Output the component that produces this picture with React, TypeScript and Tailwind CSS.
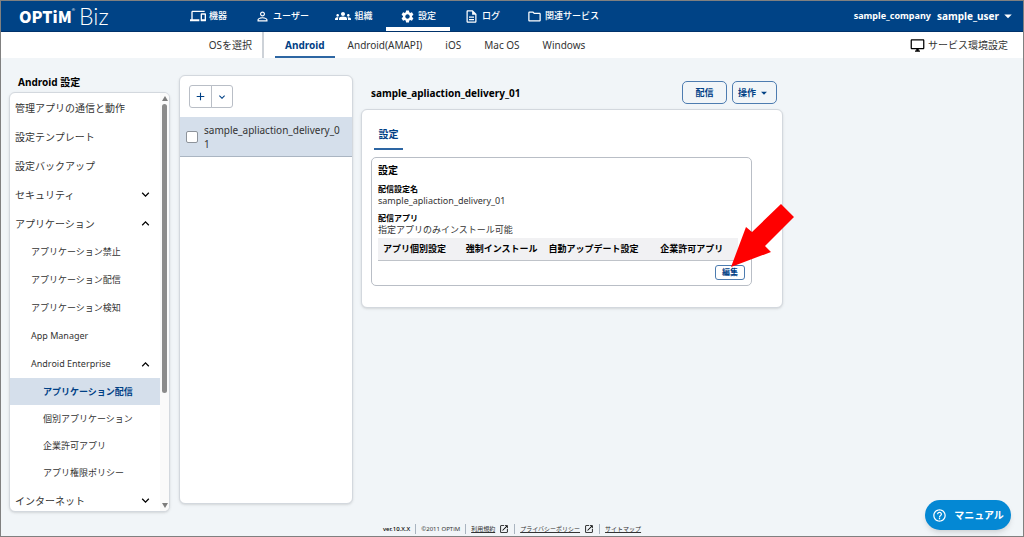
import { useState, type ReactNode } from "react";
import {
  MdAdd,
  MdArrowDropDown,
  MdDevices,
  MdExpandLess,
  MdExpandMore,
  MdGroups,
  MdHelpOutline,
  MdOpenInNew,
  MdOutlineDescription,
  MdOutlineDesktopWindows,
  MdOutlineFolder,
  MdPersonOutline,
  MdSettings,
} from "react-icons/md";

const mainNav = [
  { label: "機器", icon: <MdDevices size={16} />, width: "w-[67px]" },
  { label: "ユーザー", icon: <MdPersonOutline size={15} />, width: "w-[80px]" },
  { label: "組織", icon: <MdGroups size={16} />, width: "w-[64px]" },
  { label: "設定", icon: <MdSettings size={15} />, width: "w-[64px]", active: true },
  { label: "ログ", icon: <MdOutlineDescription size={15} />, width: "w-[64px]" },
  { label: "関連サービス", icon: <MdOutlineFolder size={15} />, width: "w-[98px]" },
];

const osTabs = ["Android", "Android(AMAPI)", "iOS", "Mac OS", "Windows"];

const columns = ["アプリ個別設定", "強制インストール", "自動アップデート設定", "企業許可アプリ"];

type Level = 1 | 2 | 3;

const levelClass: Record<Level, string> = {
  1: "h-[29px] pl-[5px] text-[10px]",
  2: "h-[28px] pl-[21px] text-[9px]",
  3: "h-[27px] pl-[33px] text-[9px]",
};

function MenuItem({
  level,
  label,
  open,
  selected,
  onToggle,
}: {
  level: Level;
  label: string;
  open?: boolean;
  selected?: boolean;
  onToggle?: () => void;
}) {
  const row = `flex w-full items-center justify-between pr-[7px] text-left ${levelClass[level]}`;
  if (onToggle) {
    return (
      <button type="button" aria-expanded={open} onClick={onToggle} className={row}>
        <span>{label}</span>
        {open ? <MdExpandLess size={15} className="text-black" /> : <MdExpandMore size={15} className="text-black" />}
      </button>
    );
  }
  return (
    <a href="#" className={`${row} ${selected ? "bg-[#d5dfeb] font-bold text-[#004085]" : ""}`}>
      {label}
    </a>
  );
}

function SideMenu() {
  const [security, setSecurity] = useState(false);
  const [apps, setApps] = useState(true);
  const [enterprise, setEnterprise] = useState(true);
  const [internet, setInternet] = useState(false);

  return (
    <nav aria-label="Android 設定" className="flex max-h-[420px] overflow-hidden rounded-md border border-[#d3d8de] bg-white shadow-sm">
      <div className="min-w-0 flex-1 overflow-y-auto [scrollbar-width:none]">
        <MenuItem level={1} label="管理アプリの通信と動作" />
        <MenuItem level={1} label="設定テンプレート" />
        <MenuItem level={1} label="設定バックアップ" />
        <MenuItem level={1} label="セキュリティ" open={security} onToggle={() => setSecurity(!security)} />
        <MenuItem level={1} label="アプリケーション" open={apps} onToggle={() => setApps(!apps)} />
        {apps && (
          <>
            <MenuItem level={2} label="アプリケーション禁止" />
            <MenuItem level={2} label="アプリケーション配信" />
            <MenuItem level={2} label="アプリケーション検知" />
            <MenuItem level={2} label="App Manager" />
            <MenuItem level={2} label="Android Enterprise" open={enterprise} onToggle={() => setEnterprise(!enterprise)} />
            {enterprise && (
              <>
                <MenuItem level={3} label="アプリケーション配信" selected />
                <MenuItem level={3} label="個別アプリケーション" />
                <MenuItem level={3} label="企業許可アプリ" />
                <MenuItem level={3} label="アプリ権限ポリシー" />
              </>
            )}
          </>
        )}
        <MenuItem level={1} label="インターネット" open={internet} onToggle={() => setInternet(!internet)} />
      </div>
      {/* Scroll bar */}
      <div aria-hidden="true" className="flex w-[9px] flex-col items-center gap-[3px] bg-[#fafafa] py-[3px]">
        <svg viewBox="0 0 6 5" className="h-[5px] w-[6px] shrink-0 fill-[#7d7d7d]">
          <path d="M3 0 6 5H0Z" />
        </svg>
        <div className="w-full flex-1">
          <div className="mx-auto h-[73%] w-[5px] rounded-full bg-[#8b8b8b]" />
        </div>
        <svg viewBox="0 0 6 5" className="h-[5px] w-[6px] shrink-0 fill-[#7d7d7d]">
          <path d="M3 5 6 0H0Z" />
        </svg>
      </div>
    </nav>
  );
}

function OutlineButton({ children }: { children: ReactNode }) {
  return (
    <button
      type="button"
      className="flex h-[23px] w-[45px] items-center justify-center gap-px rounded-[5px] border border-[#4d7cb0] text-[9px] font-bold text-[#004085]"
    >
      {children}
    </button>
  );
}

export default function App() {
  const [os, setOs] = useState("Android");
  const [checked, setChecked] = useState(false);

  return (
    <div className="relative flex min-h-screen flex-col border border-[#808080] bg-[#f1f5f8] font-['Noto_Sans','Noto_Sans_CJK_JP',sans-serif] text-[10px] leading-[14px] text-[#333]">
      {/* Header */}
      <header className="flex h-[31px] items-stretch border-b border-[#00326b] bg-[#004386] text-white">
        <a href="#" className="flex w-[174px] shrink-0 items-center pl-[18px]">
          <span className="font-['Noto_Sans_CJK_JP',sans-serif] text-[16px] font-black leading-none">OPTiM</span>
          <sup className="-mt-2 text-[4px]">®</sup>
          <span className="ml-1 font-[Lato,sans-serif] text-[23px] font-light leading-none">Biz</span>
        </a>
        <nav className="flex">
          {mainNav.map((item) => (
            <a
              key={item.label}
              href="#"
              className={`flex items-center justify-center gap-[3px] whitespace-nowrap border-b-4 pt-1 text-[9px] font-medium ${item.width} ${
                item.active ? "border-white font-bold" : "border-transparent"
              }`}
            >
              {item.icon}
              {item.label}
            </a>
          ))}
        </nav>
        <button type="button" className="ml-auto flex items-center pr-[6px] font-bold">
          <span className="mr-[6px] text-[9px]">sample_company</span>
          <span>sample_user</span>
          <MdArrowDropDown size={18} />
        </button>
      </header>

      {/* OS tabs */}
      <div className="flex h-[26px] items-stretch bg-white text-[10px]">
        <span className="flex w-[263px] items-center justify-end border-r-2 border-[#cdd2d8] pr-[10px]">OSを選択</span>
        <nav className="ml-[11px] flex gap-[3px]">
          {osTabs.map((tab) => (
            <button
              key={tab}
              type="button"
              onClick={() => setOs(tab)}
              className={`border-b-2 px-[10px] pt-[2px] ${
                tab === os ? "border-[#2d66a3] font-bold text-[#004085]" : "border-transparent"
              }`}
            >
              {tab}
            </button>
          ))}
        </nav>
        <a href="#" className="ml-auto flex items-center gap-[3px] pr-[15px]">
          <MdOutlineDesktopWindows size={15} className="text-black" />
          サービス環境設定
        </a>
      </div>

      <div className="flex flex-1 items-start pl-2">
        {/* Side menu */}
        <aside className="w-[161px] shrink-0 pt-[17px]">
          <h2 className="mb-[3px] pl-[9px] text-[10px] font-bold text-black">Android 設定</h2>
          <SideMenu />
        </aside>

        {/* List of settings */}
        <section className="ml-[9px] mt-[17px] min-h-[429px] w-[174px] shrink-0 rounded-md border border-[#d3d8de] bg-white shadow-sm">
          <div className="flex px-[9px] pb-[9px] pt-[9px] text-[#004085]">
            <button type="button" aria-label="追加" className="flex h-[23px] w-[23px] items-center justify-center rounded-l-[3px] border border-[#b9bec6]">
              <MdAdd size={13} />
            </button>
            <button type="button" aria-label="その他" className="-ml-px flex h-[23px] w-[22px] items-center justify-center rounded-r-[3px] border border-[#b9bec6]">
              <MdExpandMore size={12} />
            </button>
          </div>
          <label className="flex h-[40px] items-center gap-[6px] border-b border-[#aab5c2] bg-[#d5dfeb] pl-[6px] pr-[8px]">
            <input
              type="checkbox"
              checked={checked}
              onChange={(e) => setChecked(e.target.checked)}
              className="size-3 shrink-0 appearance-none rounded-[2px] border border-[#8d939b] bg-white checked:bg-[#004085]"
            />
            <span className="min-w-0 break-all">sample_apliaction_delivery_01</span>
          </label>
        </section>

        {/* Detail */}
        <main className="ml-[8px] mr-4 mt-[23px] w-full max-w-[422px]">
          <div className="mb-[5px] flex items-center gap-[5px] pl-[10px] pr-[6px]">
            <h1 className="mr-auto text-[10px] font-bold text-black">sample_apliaction_delivery_01</h1>
            <OutlineButton>配信</OutlineButton>
            <OutlineButton>
              操作
              <MdArrowDropDown size={14} />
            </OutlineButton>
          </div>

          <div className="rounded-md border border-[#d3d8de] bg-white pb-[21px] pl-[9px] pr-[30px] pt-[17px] shadow-sm">
            <button type="button" className="ml-[3px] block w-[29px] border-b-2 border-[#2d66a3] pb-[7px] text-center font-bold text-[#004085]">
              設定
            </button>

            <div className="relative mt-[7px] rounded-[5px] border border-[#b9bec6] px-[6px] pb-[5px] pt-[5px]">
              <h2 className="mb-[6px] font-bold text-black">設定</h2>
              <dl className="text-[9px] leading-[12px]">
                <dt className="text-[8px] font-bold text-black">配信設定名</dt>
                <dd className="mb-[5px]">sample_apliaction_delivery_01</dd>
                <dt className="text-[8px] font-bold text-black">配信アプリ</dt>
                <dd>指定アプリのみインストール可能</dd>
              </dl>
              <table className="mt-[2px] w-[calc(100%-7px)] table-fixed border-b border-[#bfc3c9]">
                <colgroup>
                  <col className="w-[23%]" />
                  <col className="w-[23%]" />
                  <col className="w-[31%]" />
                  <col className="w-[23%]" />
                </colgroup>
                <thead>
                  <tr className="h-[22px] bg-[#f1f1f3]">
                    {columns.map((c) => (
                      <th key={c} scope="col" className="whitespace-nowrap pl-[5px] text-left text-[9px] font-bold leading-[12px] text-black">
                        {c}
                      </th>
                    ))}
                  </tr>
                </thead>
              </table>
              <button
                type="button"
                className="ml-auto mt-[4px] flex h-[15px] w-[30px] items-center justify-center rounded-[3px] border border-[#4d7cb0] text-[8px] font-bold leading-none text-[#004085]"
              >
                編集
              </button>

              {/* Pointer arrow */}
              <svg
                aria-hidden="true"
                viewBox="0 0 63 63"
                className="pointer-events-none absolute -right-[43px] bottom-[18px] size-[63px] fill-[#ff0000]"
              >
                <path d="M0 63 15 23 21 28 50 0 63 13 34 42 40 48Z" />
              </svg>
            </div>
          </div>
        </main>
      </div>

      {/* Footer */}
      <footer className="flex items-center justify-center pb-[2px] pt-[4px] text-[6px] leading-[10px]">
        <span className="border-r border-[#a9b4c0] pr-[5px] font-medium text-black">ver.10.X.X</span>
        <span className="border-r border-[#a9b4c0] px-[5px]">©2011 OPTiM</span>
        <a href="#" className="flex items-center gap-1 border-r border-[#a9b4c0] px-[5px]">
          <span className="underline">利用規約</span>
          <MdOpenInNew size={10} className="text-black" />
        </a>
        <a href="#" className="flex items-center gap-1 border-r border-[#a9b4c0] px-[5px]">
          <span className="underline">プライバシーポリシー</span>
          <MdOpenInNew size={10} className="text-black" />
        </a>
        <a href="#" className="pl-[5px] underline">
          サイトマップ
        </a>
      </footer>

      {/* Floating help */}
      <button
        type="button"
        className="absolute bottom-[6px] right-[12px] flex h-[30px] w-[86px] items-center justify-center gap-[7px] rounded-full bg-[#0488d4] text-[10px] font-bold text-white shadow-md"
      >
        <MdHelpOutline size={15} />
        マニュアル
      </button>
    </div>
  );
}
